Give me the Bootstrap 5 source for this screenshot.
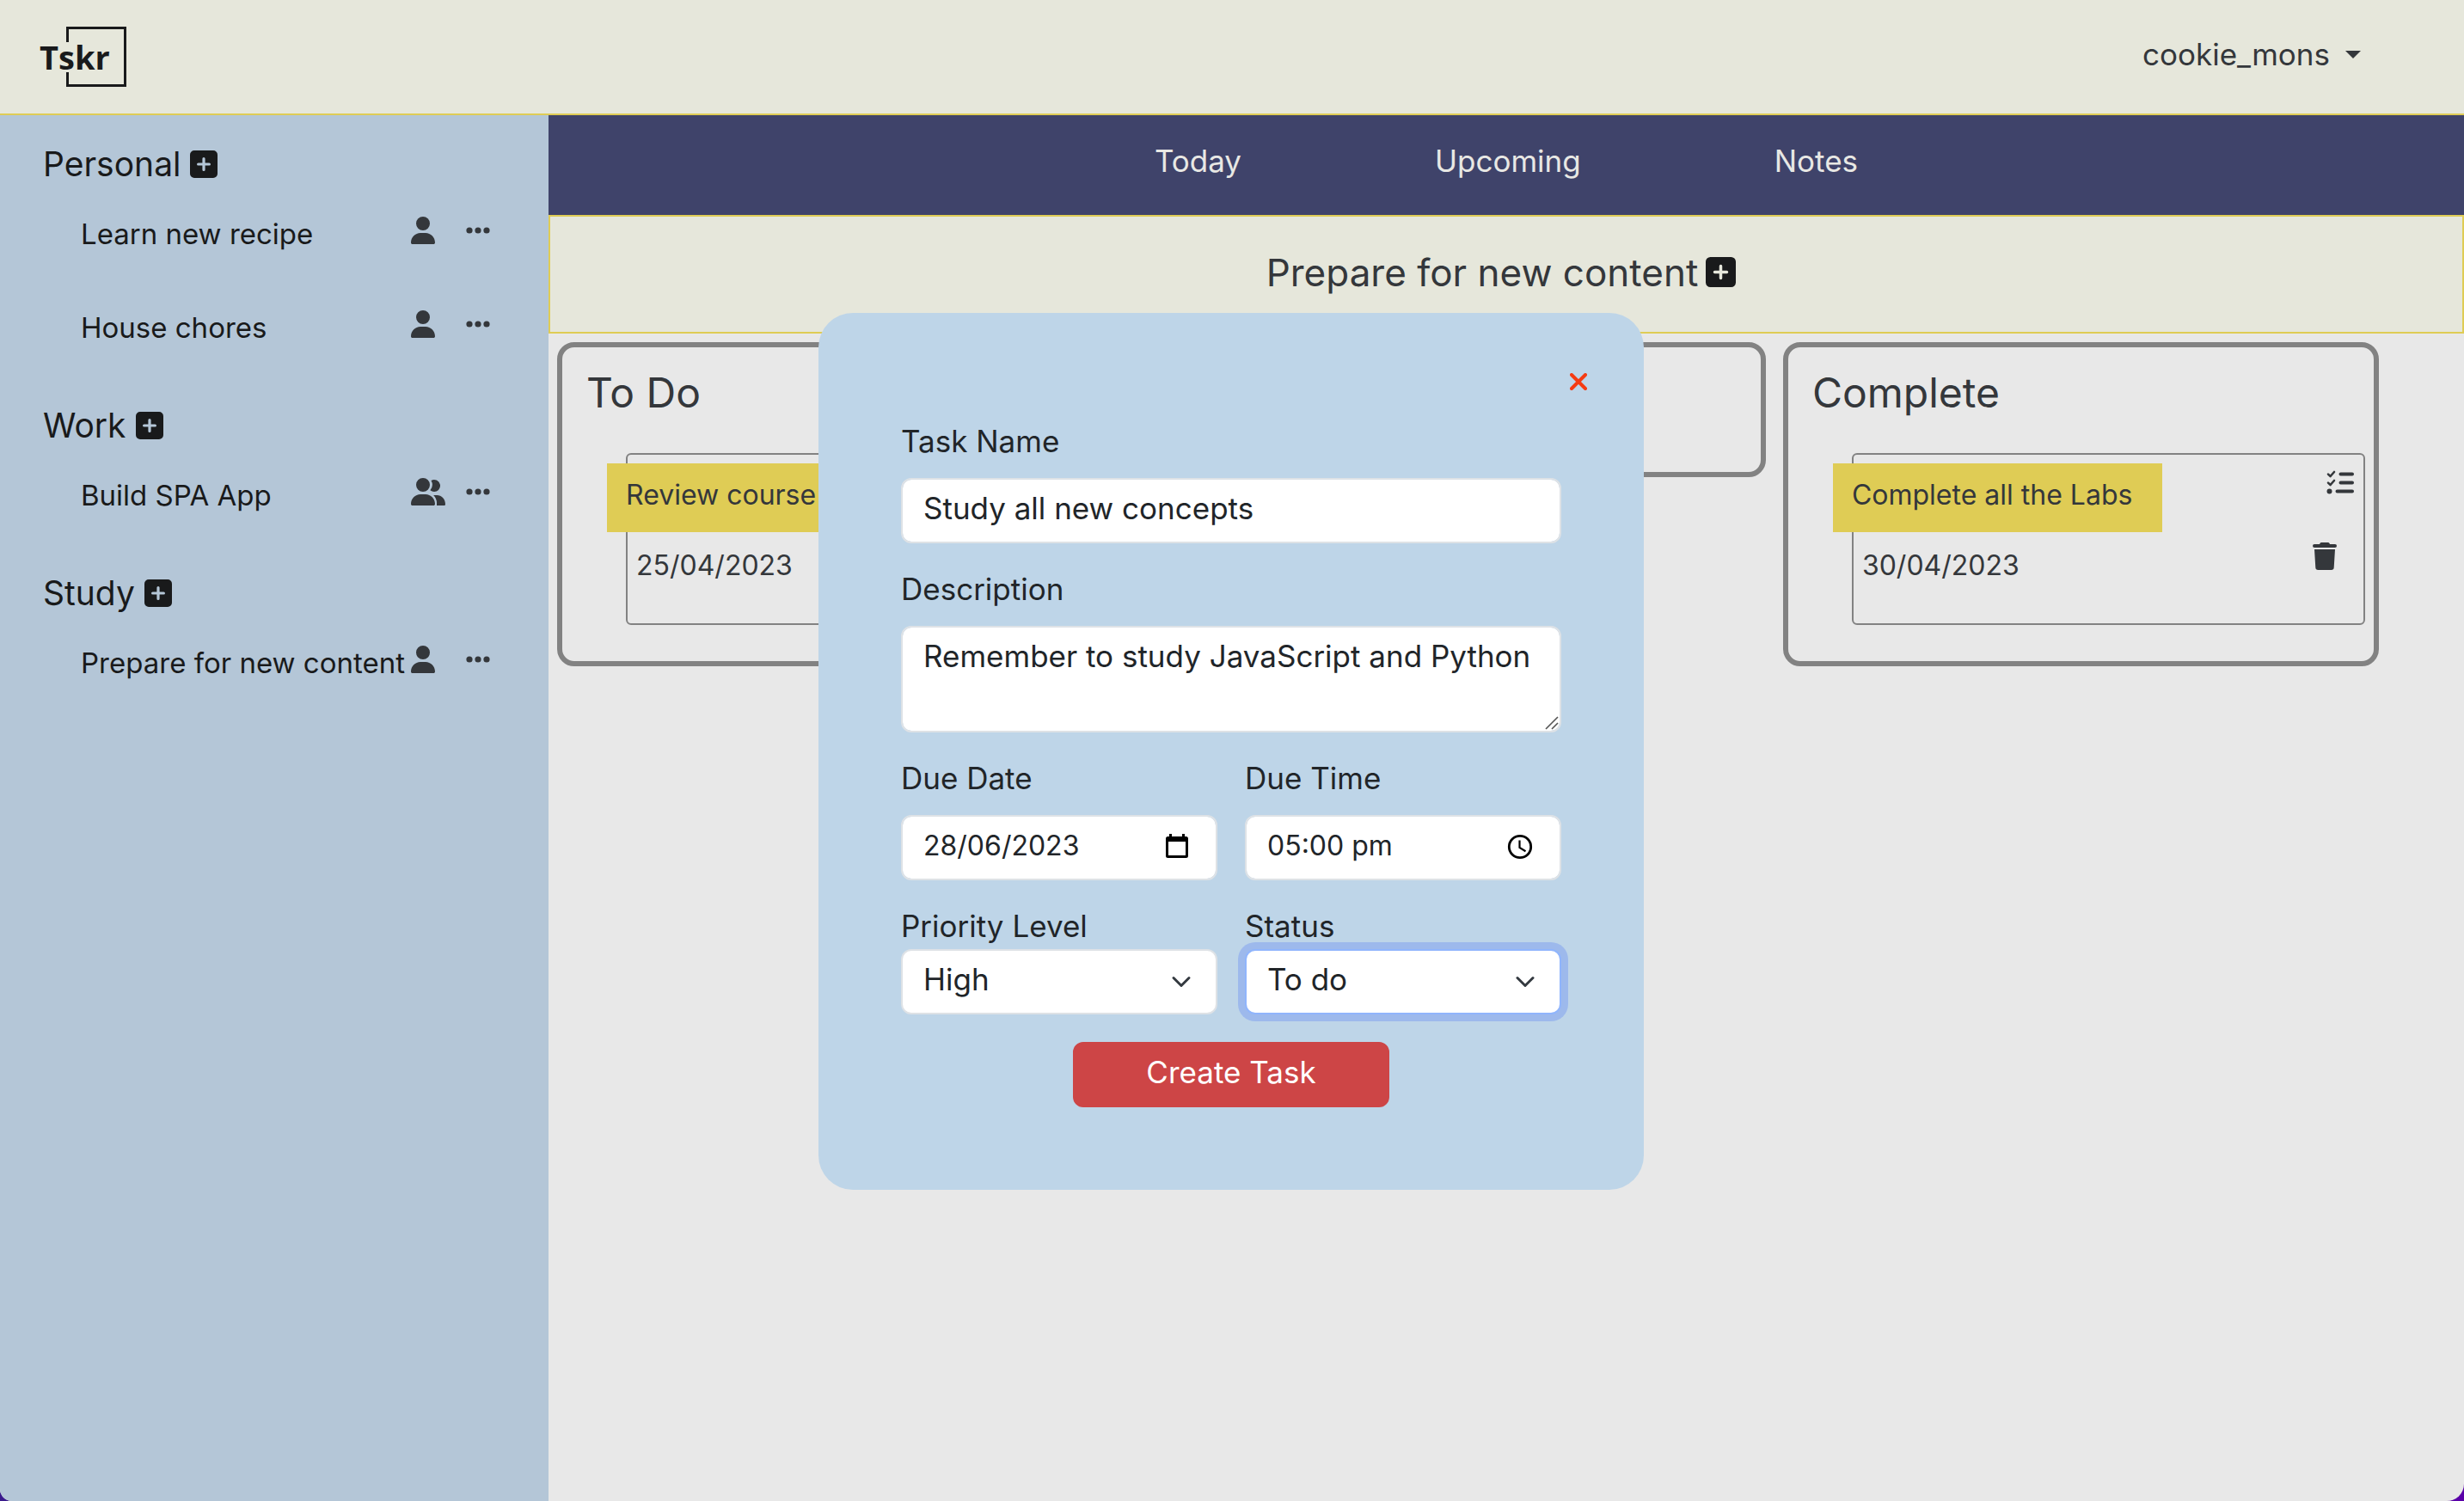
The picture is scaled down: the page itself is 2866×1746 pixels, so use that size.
<!DOCTYPE html>
<html lang="en">
<head>
<meta charset="utf-8">
<meta name="viewport" content="width=device-width, initial-scale=1">
<title>Tskr</title>
<link href="https://cdn.jsdelivr.net/npm/bootstrap@5.3.0/dist/css/bootstrap.min.css" rel="stylesheet">
<style>
  :root { font-size: 32px; --tk-cream: #e6e7db; --tk-yellow: #dfcc55; --tk-ink: #34373b; --tk-black: #191a1b; }
  html { background: linear-gradient(90deg, #3a1a8c, #5a00a8); }
  body { font-family: Inter, "Liberation Sans", sans-serif; font-size: 35px; line-height: 48px; background: transparent; }
  .tk-app { min-height: 100vh; background: #e8e8e8; border-radius: 0 0 20px 14px; overflow: hidden; }
  .tk-top { height: 134px; padding: 0 120px 6px 46px; background: var(--tk-cream); border-bottom: 2px solid var(--tk-yellow); }
  .tk-user { font-size: 35px; line-height: 48px; color: var(--tk-ink); }
  .tk-user::after { margin-left: 18px; vertical-align: 8px; border-top-width: 9px; border-left-width: 9px; border-right-width: 9px; }
  .tk-logo { display: block; margin-top: 6px; }

  .tk-side { flex: 0 0 638px; background: #b4c6d7; padding-top: 16px; color: var(--tk-black); }
  .tk-side h2 { height: 86px; margin: 0; padding: 0 0 4px 50px; font-size: 39px; font-weight: 400; line-height: 48px; gap: 11px; }
  .tk-proj { height: 109px; padding: 12px 68px 0 94px; font-size: 33px; }
  .tk-proj a { color: inherit; white-space: nowrap; }
  .tk-tools { color: var(--tk-ink); height: 40px; }
  .tk-plain { border: 0; padding: 0; background: none; color: inherit; display: block; line-height: 0; }
  .tk-who { width: 64px; }

  .tk-tabs { height: 116px; gap: 225px; background: #3f436a; padding-bottom: 10px; }
  .tk-tabs a { color: #e8e8e4; }
  .tk-title { height: 138px; gap: 9px; padding: 0 12px 5px 0; background: var(--tk-cream); border: 2px solid var(--tk-yellow); color: var(--tk-ink); }
  .tk-title h1 { font-size: 44px; font-weight: 400; line-height: 52px; margin: 0; }

  .tk-col { flex: 0 0 32%; padding: 10px; color: var(--tk-ink); }
  .tk-box { border: 6px solid #828282; border-radius: 20px; min-height: 157px; padding: 24px 10px 42px 74px; }
  .tk-box h3 { font-size: 48px; font-weight: 400; line-height: 58px; margin: 0 0 41px -46px; }
  .tk-task { height: 200px; border: 2px solid #828282; border-radius: 6px; padding: 10px 10px 0 0; }
  .tk-name { height: 80px; min-width: 383px; margin-left: -24px; padding: 13px 22px 0 22px; background: var(--tk-yellow); font-size: 32px; white-space: nowrap; }
  .tk-date { padding: 15px 0 0 10px; font-size: 32px; }
  .tk-acts { padding-top: 8px; gap: 56px; width: 49px; }

  .tk-modal { position: absolute; top: 364px; left: 0; right: 2px; margin: 0 auto; width: 960px; padding: 0 96px 96px; border-radius: 40px; background: #bed5e8; color: #212529; }
  .tk-mhead { height: 128px; padding-top: 60px; margin-right: -40px; color: #f53b12; }
  .tk-close { width: 40px; height: 40px; display: flex; align-items: center; justify-content: center; }
  .tk-lab { display: block; line-height: 42px; padding-bottom: 22px; margin: 0; }
  .tk-lab.tk-tight { padding-bottom: 6px; }
  .tk-modal .form-control, .tk-modal .form-select { font-size: 35px; line-height: 48px; height: 76px; padding: 9px 24px 15px; border: 2px solid #dee2e6; border-radius: 12px; color: #212529; background-color: #fff; }
  .tk-modal .form-select { background-size: 32px 24px; background-position: right 24px center; }
  .tk-modal textarea.form-control { height: 124px; resize: none; overflow: hidden; }
  .tk-modal .form-control.tk-num { font-size: 32px; }
  .tk-modal .form-select.tk-focus { border-color: #90b5fc; box-shadow: 0 0 0 8px #9db9ec; }
  .tk-modal .row { --bs-gutter-x: 32px; --bs-gutter-y: 0; }
  .tk-in { position: absolute; right: 33px; top: 22px; }
  .tk-grip { position: absolute; right: 3px; bottom: 3px; }
  .tk-send { width: 368px; height: 76px; padding: 7px 0 13px; border: 2px solid #cd4546; border-radius: 12px; background: #cd4546; color: #fff; font-size: 35px; line-height: 48px; }
</style>
<script src="https://cdn.jsdelivr.net/npm/bootstrap@5.3.0/dist/js/bootstrap.bundle.min.js"></script>
</head>
<body>
<svg width="0" height="0" class="position-absolute" aria-hidden="true">
  <symbol id="plus" viewBox="0 0 32 32"><path fill="currentColor" fill-rule="evenodd" d="M5 0h22a5 5 0 0 1 5 5v22a5 5 0 0 1-5 5H5a5 5 0 0 1-5-5V5a5 5 0 0 1 5-5zm11 8a1.600 1.600 0 0 0-1.600 1.600v4.800H9.600a1.600 1.600 0 0 0 0 3.200h4.800v4.800a1.600 1.600 0 0 0 3.200 0v-4.800h4.800a1.600 1.600 0 0 0 0-3.200h-4.800V9.600A1.600 1.600 0 0 0 16 8z"/></symbol>
  <symbol id="user" viewBox="0 0 28 32"><path fill="currentColor" d="M14 16a8 8 0 1 0 0-16 8 8 0 0 0 0 16zm-3 3C5 19 0 24 0 30.200 0 31.200.8 32 1.800 32h24.400c1 0 1.800-.8 1.800-1.800C28 24 23 19 17 19z"/></symbol>
  <symbol id="users" viewBox="0 0 40 32"><path fill="currentColor" d="M14 16a8 8 0 1 0 0-16 8 8 0 0 0 0 16zm-3 3C5 19 0 24 0 30.200 0 31.200.8 32 1.800 32h24.400c1 0 1.800-.8 1.800-1.800C28 24 23 19 17 19zM27 16a7 7 0 1 0-3.500-13.060A10 10 0 0 1 22.400 14.200 7 7 0 0 0 27 16zM30.200 20h-4A13.300 13.300 0 0 1 30 29.800V32h8.400c.9 0 1.600-.7 1.600-1.600C40 24.700 35.600 20 30.200 20z"/></symbol>
  <symbol id="dots" viewBox="0 0 28 8"><g fill="currentColor"><circle cx="4" cy="4" r="3.600"/><circle cx="14" cy="4" r="3.600"/><circle cx="24" cy="4" r="3.600"/></g></symbol>
  <symbol id="checks" viewBox="0 0 33 28"><g fill="none" stroke="currentColor" stroke-linecap="round"><path stroke-width="4" d="M16.500 4.500h13.500M16.500 14.500h13.500M12.500 24.500H30"/><path stroke-width="2.600" stroke-linejoin="round" d="M2 4.600l2.600 2.400 4.400-5M2 14.600l2.600 2.400 4.400-5"/></g><circle cx="3.500" cy="24.500" r="3" fill="currentColor"/></symbol>
  <symbol id="bin" viewBox="0 0 28 32"><path fill="currentColor" d="M8.500 1.100 8 2H2a2 2 0 0 0 0 4h24a2 2 0 0 0 0-4h-6l-.5-.9A2 2 0 0 0 17.800 0h-7.600a2 2 0 0 0-1.700 1.100zM26 8H2l1.300 21.200A3 3 0 0 0 6.300 32h15.400a3 3 0 0 0 3-2.800z"/></symbol>
</svg>

<div class="tk-app d-flex flex-column">
  <header class="tk-top d-flex align-items-center justify-content-between">
    <a href="#" class="tk-logo" aria-label="Tskr home">
      <svg width="102" height="70" viewBox="0 0 102 70"><path d="M32.500 18V1.500h67v67h-67V53" fill="none" stroke="#191a1b" stroke-width="3"/><text x="0" y="50" font-family="Open Sans, sans-serif" font-size="38" font-weight="700" fill="#191a1b">Tskr</text></svg>
    </a>
    <button class="tk-user btn border-0 p-0 dropdown-toggle" type="button">cookie_mons</button>
  </header>

  <div class="d-flex flex-grow-1">
    <aside class="tk-side">
      <h2 class="d-flex align-items-center">Personal <button class="tk-plain" aria-label="Add personal project"><svg width="32" height="32"><use href="#plus"/></svg></button></h2>
      <div class="tk-proj d-flex justify-content-between align-items-start"><a href="#" class="text-decoration-none">Learn new recipe</a>
        <div class="tk-tools d-flex align-items-center"><div class="tk-who"><svg class="d-block" width="28" height="32"><use href="#user"/></svg></div><button class="tk-plain" aria-label="More"><svg width="28" height="8"><use href="#dots"/></svg></button></div></div>
      <div class="tk-proj d-flex justify-content-between align-items-start"><a href="#" class="text-decoration-none">House chores</a>
        <div class="tk-tools d-flex align-items-center"><div class="tk-who"><svg class="d-block" width="28" height="32"><use href="#user"/></svg></div><button class="tk-plain" aria-label="More"><svg width="28" height="8"><use href="#dots"/></svg></button></div></div>
      <h2 class="d-flex align-items-center">Work <button class="tk-plain" aria-label="Add work project"><svg width="32" height="32"><use href="#plus"/></svg></button></h2>
      <div class="tk-proj d-flex justify-content-between align-items-start"><a href="#" class="text-decoration-none">Build SPA App</a>
        <div class="tk-tools d-flex align-items-center"><div class="tk-who"><svg class="d-block" width="40" height="32"><use href="#users"/></svg></div><button class="tk-plain" aria-label="More"><svg width="28" height="8"><use href="#dots"/></svg></button></div></div>
      <h2 class="d-flex align-items-center">Study <button class="tk-plain" aria-label="Add study project"><svg width="32" height="32"><use href="#plus"/></svg></button></h2>
      <div class="tk-proj d-flex justify-content-between align-items-start"><a href="#" class="text-decoration-none">Prepare for new content</a>
        <div class="tk-tools d-flex align-items-center"><div class="tk-who"><svg class="d-block" width="28" height="32"><use href="#user"/></svg></div><button class="tk-plain" aria-label="More"><svg width="28" height="8"><use href="#dots"/></svg></button></div></div>
    </aside>

    <main class="flex-grow-1">
      <nav class="tk-tabs d-flex align-items-center justify-content-center">
        <a href="#" class="text-decoration-none">Today</a><a href="#" class="text-decoration-none">Upcoming</a><a href="#" class="text-decoration-none">Notes</a>
      </nav>
      <div class="tk-title d-flex align-items-center justify-content-center">
        <h1>Prepare for new content</h1>
        <button class="tk-plain" aria-label="Add task"><svg width="35" height="35" color="#191a1b"><use href="#plus"/></svg></button>
      </div>
      <div class="d-flex align-items-start">
        <section class="tk-col"><div class="tk-box">
          <h3>To Do</h3>
          <article class="tk-task d-flex justify-content-between">
            <div><div class="tk-name">Review course</div><div class="tk-date">25/04/2023</div></div>
          </article>
        </div></section>
        <section class="tk-col"><div class="tk-box"></div></section>
        <section class="tk-col"><div class="tk-box">
          <h3>Complete</h3>
          <article class="tk-task d-flex justify-content-between">
            <div><div class="tk-name">Complete all the Labs</div><div class="tk-date">30/04/2023</div></div>
            <div class="tk-acts d-flex flex-column">
              <button class="tk-plain align-self-end" aria-label="Edit task"><svg width="33" height="28"><use href="#checks"/></svg></button>
              <button class="tk-plain align-self-start" aria-label="Delete task"><svg width="28" height="32"><use href="#bin"/></svg></button>
            </div>
          </article>
        </div></section>
      </div>
    </main>
  </div>
</div>

<form class="tk-modal" role="dialog" aria-label="New task">
  <div class="tk-mhead d-flex justify-content-end">
    <button type="button" class="tk-plain tk-close" aria-label="Close"><svg width="20" height="20" viewBox="0 0 20 20"><path d="M2 2l16 16M18 2L2 18" stroke="currentColor" stroke-width="4" stroke-linecap="round"/></svg></button>
  </div>
  <div class="mb-3"><label class="tk-lab" for="tname">Task Name</label><input id="tname" type="text" class="form-control" value="Study all new concepts"></div>
  <div class="mb-3"><label class="tk-lab" for="tdesc">Description</label>
    <div class="position-relative"><textarea id="tdesc" class="form-control">Remember to study JavaScript and Python</textarea>
      <svg class="tk-grip" width="16" height="16" viewBox="0 0 16 16"><path d="M1 15L15 1M8 15l7-7" stroke="#555" stroke-width="1.600"/></svg></div></div>
  <div class="row mb-3">
    <div class="col-6"><label class="tk-lab" for="tdate">Due Date</label>
      <div class="position-relative"><input id="tdate" type="text" class="form-control tk-num" value="28/06/2023">
        <svg class="tk-in" width="28" height="30" viewBox="0 0 28 30"><path fill="#000" fill-rule="evenodd" d="M5 0h3v3h12V0h3v3h1.500A2.500 2.500 0 0 1 27 5.500v20a2.500 2.500 0 0 1-2.500 2.500h-21A2.500 2.500 0 0 1 1 25.500v-20A2.500 2.500 0 0 1 3.500 3H5zM4 9v16h20V9z"/></svg></div></div>
    <div class="col-6"><label class="tk-lab" for="ttime">Due Time</label>
      <div class="position-relative"><input id="ttime" type="text" class="form-control tk-num" value="05:00 pm">
        <svg class="tk-in" width="30" height="30" viewBox="0 0 30 30"><g fill="none" stroke="#000"><circle cx="15" cy="15" r="12.700" stroke-width="2.800"/><path stroke-width="2.200" d="M14.500 7.500V16l7 4.200"/></g></svg></div></div>
  </div>
  <div class="row mb-3">
    <div class="col-6"><label class="tk-lab tk-tight" for="tprio">Priority Level</label><select id="tprio" class="form-select"><option>High</option><option>Medium</option><option>Low</option></select></div>
    <div class="col-6"><label class="tk-lab tk-tight" for="tstat">Status</label><select id="tstat" class="form-select tk-focus"><option>To do</option><option>In progress</option><option>Complete</option></select></div>
  </div>
  <div class="text-center lh-1"><button type="submit" class="tk-send">Create Task</button></div>
</form>
</body>
</html>
